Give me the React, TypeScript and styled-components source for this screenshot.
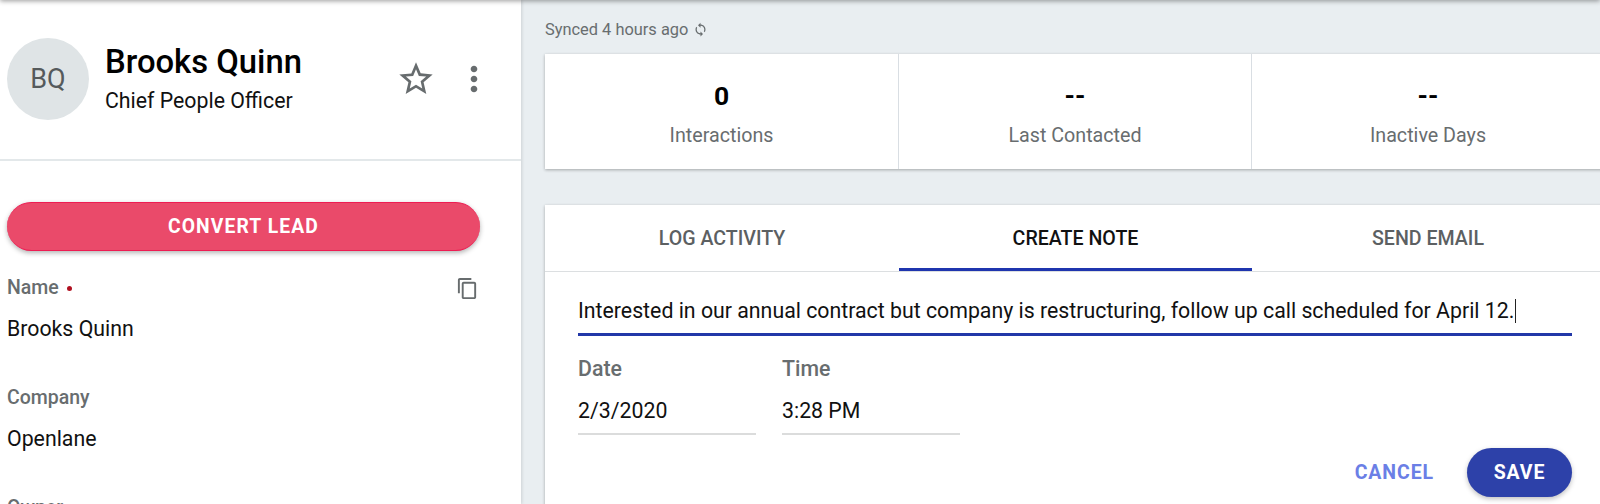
import { MdContentCopy, MdMoreVert, MdStarBorder, MdSync } from 'react-icons/md'
import styled, { createGlobalStyle } from 'styled-components'

const GlobalStyle = createGlobalStyle`
  html, body {
    margin: 0;
    padding: 0;
    background: #e9eef1;
    font-family: Roboto, "Liberation Sans", sans-serif;
  }
  * {
    box-sizing: border-box;
  }
`

const Page = styled.div`
  position: relative;
  display: flex;
  width: 1600px;
  height: 504px;
  overflow: hidden;
  background: #e9eef1;
`

const TopShadow = styled.div`
  position: absolute;
  top: -6px;
  left: 0;
  right: 0;
  height: 6px;
  box-shadow: 0 1px 5px rgba(0, 0, 0, 0.4);
`

const Sidebar = styled.aside`
  flex: none;
  width: 521px;
  height: 100%;
  background: #fff;
  box-shadow: 1px 0 3px rgba(0, 0, 0, 0.12);
`

const Profile = styled.header`
  display: flex;
  align-items: center;
  height: 161px;
  padding: 0 27px 2px 7px;
  border-bottom: 2px solid #e3e8ea;
`

const Avatar = styled.div`
  flex: none;
  display: flex;
  align-items: center;
  justify-content: center;
  width: 82px;
  height: 82px;
  border-radius: 50%;
  background: #dfe4e6;
  color: #555a5c;
  font-size: 27px;
  font-weight: 400;
`

const Identity = styled.div`
  flex: 1;
  margin-left: 16px;
`

const PersonName = styled.h1`
  margin: 0;
  color: #000;
  font-size: 32.8px;
  font-weight: 500;
  line-height: 40px;
`

const PersonRole = styled.div`
  margin-top: 5px;
  color: #111;
  font-size: 21.3px;
  line-height: 28px;
`

const StarIcon = styled(MdStarBorder)`
  flex: none;
  font-size: 40px;
  color: #676c6e;
`

const MoreIcon = styled(MdMoreVert)`
  flex: none;
  margin-left: 18px;
  font-size: 40px;
  color: #676c6e;
`

const SidebarBody = styled.div`
  padding: 41px 41px 0 7px;
`

const ConvertButton = styled.button`
  display: block;
  width: 100%;
  height: 49px;
  border: 0;
  border-top: 1px solid #ee1c52;
  border-bottom: 1px solid #ee1c52;
  border-radius: 25px;
  background: #ea4a6a;
  box-shadow: 0 2px 5px rgba(0, 0, 0, 0.3);
  color: #fff;
  font-family: inherit;
  font-size: 19.3px;
  font-weight: 700;
  letter-spacing: 1.1px;
`

const Field = styled.div`
  height: 110px;
  padding-top: 25px;
`

const FieldHead = styled.div`
  display: flex;
  align-items: center;
  justify-content: space-between;
  height: 24px;
`

const FieldLabel = styled.div`
  display: flex;
  align-items: center;
  color: #686d6f;
  font-size: 19.5px;
  font-weight: 500;
  line-height: 24px;
`

const RequiredDot = styled.span`
  width: 5px;
  height: 5px;
  margin-left: 8px;
  border-radius: 50%;
  background: #b01020;
`

const CopyIcon = styled(MdContentCopy)`
  font-size: 23px;
  margin-right: 1px;
  color: #676c6e;
`

const FieldValue = styled.div`
  margin-top: 17px;
  color: #111;
  font-size: 21.3px;
  line-height: 24px;
`

const Main = styled.main`
  flex: 1;
  min-width: 0;
  padding: 20px 0 0 24px;
`

const SyncRow = styled.div`
  display: flex;
  align-items: center;
  height: 19px;
  color: #686d6f;
  font-size: 16.4px;
`

const SyncIcon = styled(MdSync)`
  margin-left: 5px;
  font-size: 15px;
`

// both cards run a little past the window edge, as in the reference
const StatsCard = styled.section`
  display: grid;
  grid-template-columns: 353px 353px 1fr;
  height: 115px;
  margin: 15px -4px 0 0;
  background: #fff;
  box-shadow: 0 1px 3px rgba(0, 0, 0, 0.3);
`

const Stat = styled.div<{ $divided?: boolean }>`
  display: flex;
  flex-direction: column;
  align-items: center;
  padding-top: 28px;
  border-left: ${({ $divided }) => ($divided ? '1px solid #d9dee3' : 'none')};
`

const StatValue = styled.div`
  color: #000;
  font-size: 26.5px;
  font-weight: 700;
  line-height: 28px;
`

const StatLabel = styled.div`
  margin-top: 14px;
  color: #686d6f;
  font-size: 19.7px;
  line-height: 24px;
`

const EditorCard = styled.section`
  height: 320px;
  margin: 36px -4px 0 0;
  background: #fff;
  box-shadow: 0 1px 3px rgba(0, 0, 0, 0.3);
`

const Tabs = styled.nav`
  display: grid;
  grid-template-columns: 354px 353px 1fr;
  height: 67px;
  border-bottom: 1px solid #dcdfe1;
`

const Tab = styled.div<{ $active?: boolean }>`
  display: flex;
  align-items: center;
  justify-content: center;
  height: 66px;
  padding-top: 3px;
  border-bottom: 3px solid ${({ $active }) => ($active ? '#1f35ae' : 'transparent')};
  color: ${({ $active }) => ($active ? '#111' : '#5c6062')};
  font-size: 19.6px;
  font-weight: 500;
`

const EditorBody = styled.div`
  padding: 22px 32px 0 33px;
`

const NoteInput = styled.div`
  display: flex;
  align-items: center;
  height: 42px;
  padding-bottom: 6px;
  border-bottom: 3px solid #2238a8;
  color: #111;
  font-size: 21.3px;
  white-space: nowrap;
`

const Caret = styled.span`
  width: 1px;
  height: 24px;
  margin-left: 1px;
  background: #222;
`

const DateRow = styled.div`
  display: flex;
  gap: 26.5px;
  margin-top: 21px;
`

const DateField = styled.div`
  width: 177.5px;
`

const DateLabel = styled.div`
  color: #686d6f;
  font-size: 21.3px;
  font-weight: 500;
  line-height: 24px;
`

const DateValue = styled.div`
  height: 46px;
  margin-top: 8px;
  padding-top: 10px;
  border-bottom: 2px solid #dbdcdc;
  color: #111;
  font-size: 21.3px;
  line-height: 24px;
`

const Actions = styled.div`
  display: flex;
  align-items: center;
  justify-content: flex-end;
  gap: 33px;
  margin-top: 13px;
`

const CancelButton = styled.button`
  padding: 0;
  border: 0;
  background: none;
  color: #6b7fe6;
  font-family: inherit;
  font-size: 19.5px;
  font-weight: 700;
  letter-spacing: 0.9px;
`

const SaveButton = styled.button`
  width: 105px;
  height: 49px;
  border: 0;
  border-radius: 25px;
  background: #2d41a9;
  box-shadow: 0 2px 5px rgba(0, 0, 0, 0.25);
  color: #fff;
  font-family: inherit;
  font-size: 19.5px;
  font-weight: 700;
  letter-spacing: 0.9px;
`

export default function App() {
  return (
    <Page>
      <GlobalStyle />
      <TopShadow />
      <Sidebar>
        <Profile>
          <Avatar>BQ</Avatar>
          <Identity>
            <PersonName>Brooks Quinn</PersonName>
            <PersonRole>Chief People Officer</PersonRole>
          </Identity>
          <StarIcon />
          <MoreIcon />
        </Profile>
        <SidebarBody>
          <ConvertButton>CONVERT LEAD</ConvertButton>
          <Field>
            <FieldHead>
              <FieldLabel>
                Name
                <RequiredDot />
              </FieldLabel>
              <CopyIcon />
            </FieldHead>
            <FieldValue>Brooks Quinn</FieldValue>
          </Field>
          <Field>
            <FieldHead>
              <FieldLabel>Company</FieldLabel>
            </FieldHead>
            <FieldValue>Openlane</FieldValue>
          </Field>
          <Field>
            <FieldHead>
              <FieldLabel>Owner</FieldLabel>
            </FieldHead>
          </Field>
        </SidebarBody>
      </Sidebar>
      <Main>
        <SyncRow>
          Synced 4 hours ago
          <SyncIcon />
        </SyncRow>
        <StatsCard>
          <Stat>
            <StatValue>0</StatValue>
            <StatLabel>Interactions</StatLabel>
          </Stat>
          <Stat $divided>
            <StatValue>--</StatValue>
            <StatLabel>Last Contacted</StatLabel>
          </Stat>
          <Stat $divided>
            <StatValue>--</StatValue>
            <StatLabel>Inactive Days</StatLabel>
          </Stat>
        </StatsCard>
        <EditorCard>
          <Tabs>
            <Tab>LOG ACTIVITY</Tab>
            <Tab $active>CREATE NOTE</Tab>
            <Tab>SEND EMAIL</Tab>
          </Tabs>
          <EditorBody>
            <NoteInput>
              Interested in our annual contract but company is restructuring, follow up call scheduled for April 12.
              <Caret />
            </NoteInput>
            <DateRow>
              <DateField>
                <DateLabel>Date</DateLabel>
                <DateValue>2/3/2020</DateValue>
              </DateField>
              <DateField>
                <DateLabel>Time</DateLabel>
                <DateValue>3:28 PM</DateValue>
              </DateField>
            </DateRow>
            <Actions>
              <CancelButton>CANCEL</CancelButton>
              <SaveButton>SAVE</SaveButton>
            </Actions>
          </EditorBody>
        </EditorCard>
      </Main>
    </Page>
  )
}
